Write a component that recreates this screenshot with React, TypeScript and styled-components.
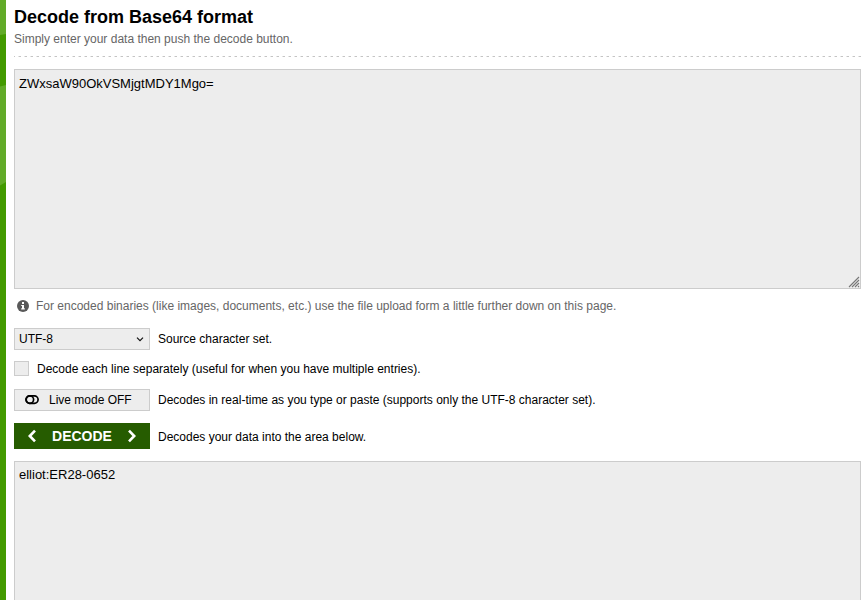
import React, { useState } from "react";
import styled, { createGlobalStyle } from "styled-components";

const GlobalStyle = createGlobalStyle`
  * { box-sizing: border-box; }
  body { margin: 0; background: #fff; overflow: hidden; }
`;

const Page = styled.div`
  display: flex;
  height: 600px;
  overflow: hidden;
  font: 12px/16px "Liberation Sans", Arial, sans-serif;
  color: #000;
`;

const Backdrop = styled.svg`
  flex: none;
  width: 6px;
  height: 600px;
`;

const Content = styled.main`
  flex: 1;
  min-width: 0;
  padding: 6px 3px 0 8px;
`;

const Title = styled.h1`
  margin: 0;
  font-size: 18px;
  line-height: 22px;
  font-weight: bold;
`;

const Subtitle = styled.p`
  margin: 3px 0 0;
  color: #666;
`;

const Divider = styled.div`
  height: 1px;
  margin: 9px 0 12px;
  background: repeating-linear-gradient(to right, #c4c4c4 0 1px, #fff 1px 4px, #e4e4e4 4px 5px, #c4c4c4 5px 6px);
`;

const AreaFrame = styled.div`
  position: relative;
`;

const Area = styled.textarea<{ $top?: number }>`
  display: block;
  width: 100%;
  height: 220px;
  margin: 0;
  padding: ${(p) => p.$top ?? 6}px 4px 4px;
  border: 1px solid #ccc;
  border-radius: 0;
  outline: 0;
  resize: none;
  background: #ededed;
  color: #000;
  font: 13px/15px "Liberation Sans", Arial, sans-serif;
`;

const ResizeGrip = styled.svg`
  position: absolute;
  right: 1px;
  bottom: 1px;
  width: 12px;
  height: 12px;
  pointer-events: none;
`;

const Info = styled.div`
  display: flex;
  align-items: center;
  gap: 7px;
  height: 16px;
  margin: 9px 0 14px;
  padding-left: 3px;
  color: #666;
`;

const Row = styled.div<{ $height: number; $after: number }>`
  display: flex;
  align-items: center;
  gap: 8px;
  height: ${(p) => p.$height}px;
  margin-bottom: ${(p) => p.$after}px;
`;

const Hint = styled.span<{ $drop?: number }>`
  white-space: nowrap;
  padding-top: ${(p) => p.$drop ?? 0}px;
`;

const SelectBox = styled.button`
  display: flex;
  align-items: center;
  justify-content: space-between;
  width: 136px;
  height: 22px;
  padding: 0 5px 0 4px;
  border: 1px solid #ccc;
  background: #ededed;
  color: #000;
  font: inherit;
`;

const Checkbox = styled.input`
  appearance: none;
  width: 15px;
  height: 15px;
  margin: 0;
  border: 1px solid #ccc;
  background: #ededed;
  &:checked { background: #265c00; }
`;

const LiveButton = styled.button`
  display: flex;
  align-items: center;
  gap: 10px;
  width: 136px;
  height: 22px;
  padding: 0 0 0 10px;
  border: 1px solid #ccc;
  background: #ededed;
  color: #000;
  font: inherit;
`;

const DecodeButton = styled.button`
  display: flex;
  align-items: center;
  justify-content: space-between;
  width: 136px;
  height: 26px;
  padding: 0 13px;
  border: 0;
  background: #265c00;
  color: #fff;
  font: bold 14px/16px "Liberation Sans", Arial, sans-serif;
`;

const Angle = ({ right }: { right?: boolean }) => (
  <svg width="10" height="14" viewBox="0 0 10 14" fill="none" stroke="#fff" strokeWidth="2.6">
    <path d={right ? "M2 1.6 7.2 7 2 12.4" : "M8 1.6 2.8 7 8 12.4"} />
  </svg>
);

export default function App() {
  const [source, setSource] = useState("ZWxsaW90OkVSMjgtMDY1Mgo=");
  const [result, setResult] = useState("elliot:ER28-0652");
  const decode = () => {
    try {
      setResult(atob(source.trim()).trim());
    } catch {
      setResult("");
    }
  };

  return (
    <Page>
      <GlobalStyle />
      <Backdrop viewBox="0 0 6 600">
        <rect width="6" height="600" fill="#439a00" />
        <path d="M0 0H6V34L0 35Z" fill="#62ab28" />
        <path d="M0 86.5 6 85V182L0 185.5Z" fill="#62ab28" />
      </Backdrop>
      <Content>
        <Title>Decode from Base64 format</Title>
        <Subtitle>Simply enter your data then push the decode button.</Subtitle>
        <Divider />
        <AreaFrame>
          <Area spellCheck={false} value={source} onChange={(e) => setSource(e.target.value)} />
          <ResizeGrip viewBox="0 0 12 12" stroke="#777" strokeWidth="1.1">
            <path d="M1 11 11 1M4 11l7-7M7 11l4-4M10 11l1-1" fill="none" />
          </ResizeGrip>
        </AreaFrame>
        <Info>
          <svg width="12" height="12" viewBox="0 0 12 12">
            <circle cx="6" cy="6" r="6" fill="#595959" />
            <path d="M5 2h2v2H5ZM4.2 5H7v3.3h.8v1.2H4.2V8.3H5V6.1h-.8Z" fill="#fff" />
          </svg>
          <span>For encoded binaries (like images, documents, etc.) use the file upload form a little further down on this page.</span>
        </Info>
        <Row $height={22} $after={11}>
          <SelectBox>
            <span>UTF-8</span>
            <svg width="8" height="6" viewBox="0 0 8 6" fill="none" stroke="#111" strokeWidth="1.2">
              <path d="M1 1.6 4 4.6 7 1.6" />
            </svg>
          </SelectBox>
          <Hint>Source character set.</Hint>
        </Row>
        <Row $height={15} $after={13}>
          <Checkbox type="checkbox" />
          <Hint $drop={1}>Decode each line separately (useful for when you have multiple entries).</Hint>
        </Row>
        <Row $height={22} $after={12}>
          <LiveButton>
            <svg width="14" height="10" viewBox="0 0 14 10" fill="none" stroke="#000" strokeWidth="1.7">
              <rect x="0.9" y="0.9" width="12.2" height="7.4" rx="3.7" />
              <circle cx="4.9" cy="4.6" r="3.7" />
            </svg>
            <span>Live mode OFF</span>
          </LiveButton>
          <Hint>Decodes in real-time as you type or paste (supports only the UTF-8 character set).</Hint>
        </Row>
        <Row $height={26} $after={12}>
          <DecodeButton onClick={decode}>
            <Angle />
            <span>DECODE</span>
            <Angle right />
          </DecodeButton>
          <Hint $drop={2}>Decodes your data into the area below.</Hint>
        </Row>
        <Area readOnly $top={5} value={result} />
      </Content>
    </Page>
  );
}
